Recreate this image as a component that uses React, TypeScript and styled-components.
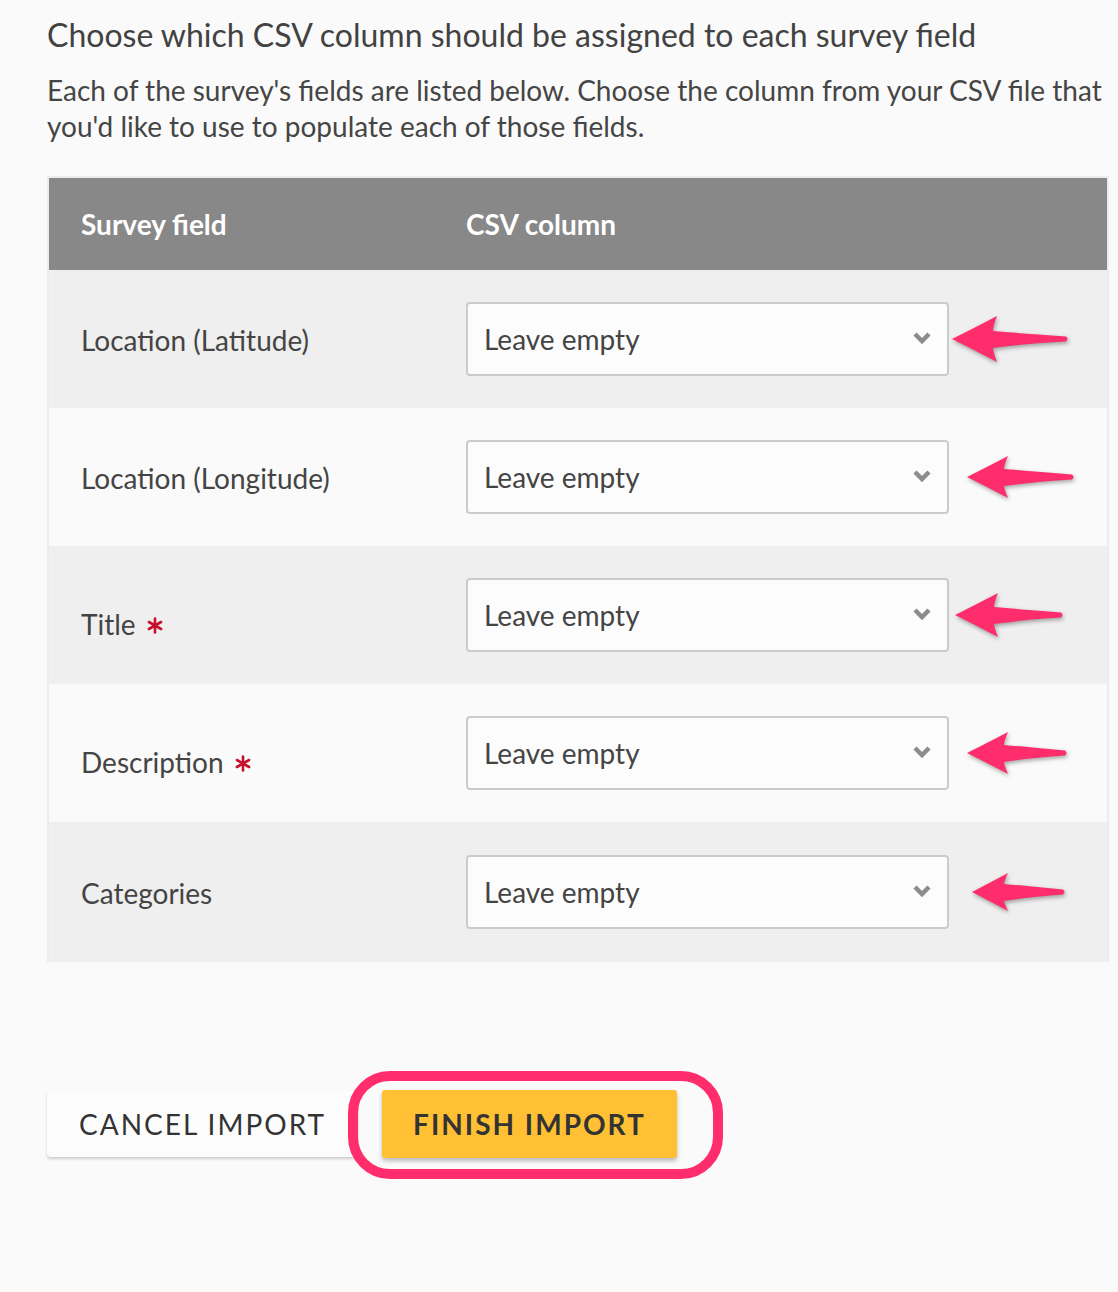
import { createGlobalStyle } from 'styled-components';
import styled from 'styled-components';

const GlobalStyle = createGlobalStyle`
    * {
        box-sizing: border-box;
    }

    body {
        margin: 0;
        background: #fafafa;
        font-family: Lato, 'Open Sans', sans-serif;
        color: #444;
    }
`;

const Page = styled.main`
    width: 1118px;
    min-height: 1292px;
    padding: 13px 9px 0 47px;
`;

const Heading = styled.h2`
    margin: 0;
    font-size: 32px;
    font-weight: 400;
    line-height: 44px;
    color: #424242;
`;

const Intro = styled.p`
    margin: 15px 0 0;
    font-size: 28px;
    line-height: 36px;
    color: #454545;
`;

const Table = styled.div`
    margin-top: 32px;
    border: 2px solid #ececec;
    border-bottom: 0;
`;

const HeadRow = styled.div`
    display: grid;
    grid-template-columns: 417px 1fr;
    align-items: center;
    height: 92px;
    background: #888;
`;

const HeadCell = styled.div`
    padding-left: 32px;
    font-size: 28px;
    font-weight: 700;
    color: #fff;

    & + & {
        padding-left: 0;
    }
`;

const Row = styled.div<{ shade: boolean; tall?: boolean }>`
    position: relative;
    display: grid;
    grid-template-columns: 417px 1fr;
    align-items: center;
    height: ${({ tall }) => (tall ? '140px' : '138px')};
    background: ${({ shade }) => (shade ? '#efefef' : '#fafafa')};
`;

const Label = styled.div<{ required?: boolean }>`
    display: flex;
    align-items: center;
    padding-left: 32px;
    padding-top: ${({ required }) => (required ? '18px' : '2px')};
    font-size: 28px;
    color: #444;
`;

const Star = styled.svg`
    margin-left: 11px;
    margin-top: 2px;
`;

const Select = styled.div`
    position: relative;
    display: flex;
    align-items: center;
    width: 483px;
    height: 74px;
    padding: 0 16px;
    border: 2px solid #cbcbcb;
    border-radius: 4px;
    background: #fcfcfc;
    font-size: 28px;
    color: #444;
`;

const Chevron = styled.svg`
    position: absolute;
    right: 15px;
    top: 27px;
`;

const Arrow = styled.svg`
    position: absolute;
    top: 50%;
    margin-top: -26px;
    filter: drop-shadow(1px 2px 2px rgba(0, 0, 0, 0.35));
`;

const Actions = styled.div`
    display: flex;
    align-items: center;
    gap: 24px;
    margin-top: 128px;
`;

const CancelButton = styled.button`
    height: 66px;
    padding: 0 32px;
    border: 0;
    border-radius: 4px;
    background: #fcfcfc;
    box-shadow: 0 2px 3px rgba(0, 0, 0, 0.18);
    font-family: Lato, sans-serif;
    font-size: 28px;
    letter-spacing: 2px;
    color: #333;
`;

const Highlight = styled.div`
    position: relative;
`;

const Ring = styled.span`
    position: absolute;
    top: -19px;
    left: -34px;
    right: -46px;
    bottom: -21px;
    border: 10px solid #ff2d6b;
    border-radius: 42px;
    pointer-events: none;
`;

const FinishButton = styled.button`
    height: 68px;
    padding: 0 31px;
    border: 0;
    border-radius: 3px;
    background: #ffc133;
    box-shadow: 0 3px 4px rgba(0, 0, 0, 0.25);
    font-family: Lato, sans-serif;
    font-size: 28px;
    font-weight: 700;
    letter-spacing: 2px;
    color: #333;
`;

// tip: left of arrow in page px, head: head length, length: total length, half: barb half height
const fields = [
    { name: 'Location (Latitude)', required: false, tip: 952, head: 45, length: 116, half: 23 },
    { name: 'Location (Longitude)', required: false, tip: 967, head: 41, length: 107, half: 21 },
    { name: 'Title', required: true, tip: 955, head: 43, length: 108, half: 22 },
    { name: 'Description', required: true, tip: 967, head: 41, length: 100, half: 21 },
    { name: 'Categories', required: false, tip: 972, head: 36, length: 93, half: 19 },
];

const ROW_LEFT = 49;

const PointerArrow = ({
    tip,
    head,
    length,
    half,
}: {
    tip: number;
    head: number;
    length: number;
    half: number;
}) => {
    const cy = 26;
    const h = head + 3;
    const end = length + 3;
    const d = [
        `M3 ${cy}`,
        `Q${h * 0.5} ${cy - half * 0.45} ${h} ${cy - half}`,
        `Q${h - 4} ${cy - half * 0.55} ${h - 4} ${cy - 8}`,
        `Q${(h + end) / 2} ${cy - 5} ${end - 2} ${cy - 2.5}`,
        `Q${end + 1} ${cy} ${end - 2} ${cy + 2.5}`,
        `Q${(h + end) / 2} ${cy + 4} ${h - 4} ${cy + 9}`,
        `Q${h - 4} ${cy + half * 0.55} ${h} ${cy + half}`,
        `Q${h * 0.5} ${cy + half * 0.45} 3 ${cy}`,
        'Z',
    ].join(' ');

    return (
        <Arrow
            style={{ left: tip - ROW_LEFT - 3 }}
            width={length + 10}
            height="52"
            viewBox={`0 0 ${length + 10} 52`}
        >
            <path d={d} fill="#ff2d6b" />
        </Arrow>
    );
};

const RequiredMark = () => (
    <Star width="16" height="17" viewBox="0 0 16 17">
        <g stroke="#c8102e" strokeWidth="2.6" strokeLinecap="round">
            <line x1="8" y1="1.5" x2="8" y2="15.5" />
            <line x1="1.9" y1="5" x2="14.1" y2="12" />
            <line x1="1.9" y1="12" x2="14.1" y2="5" />
        </g>
    </Star>
);

const App = () => {
    return (
        <>
            <GlobalStyle />
            <Page>
                <Heading>
                    Choose which CSV column should be assigned to each survey
                    field
                </Heading>
                <Intro>
                    Each of the survey's fields are listed below. Choose the
                    column from your CSV file that you'd like to use to
                    populate each of those fields.
                </Intro>
                <Table>
                    <HeadRow>
                        <HeadCell>Survey field</HeadCell>
                        <HeadCell>CSV column</HeadCell>
                    </HeadRow>
                    {fields.map((field, i) => (
                        <Row
                            key={field.name}
                            shade={i % 2 === 0}
                            tall={i === fields.length - 1}
                        >
                            <Label required={field.required}>
                                {field.name}
                                {field.required && <RequiredMark />}
                            </Label>
                            <div>
                                <Select>
                                    Leave empty
                                    <Chevron
                                        width="20"
                                        height="14"
                                        viewBox="0 0 20 14"
                                    >
                                        <polyline
                                            points="3,3 10,10 17,3"
                                            fill="none"
                                            stroke="#8c8c8c"
                                            strokeWidth="4.5"
                                        />
                                    </Chevron>
                                </Select>
                            </div>
                            <PointerArrow
                                tip={field.tip}
                                head={field.head}
                                length={field.length}
                                half={field.half}
                            />
                        </Row>
                    ))}
                </Table>
                <Actions>
                    <CancelButton type="button">CANCEL IMPORT</CancelButton>
                    <Highlight>
                        <FinishButton type="submit">FINISH IMPORT</FinishButton>
                        <Ring />
                    </Highlight>
                </Actions>
            </Page>
        </>
    );
};

export default App;
